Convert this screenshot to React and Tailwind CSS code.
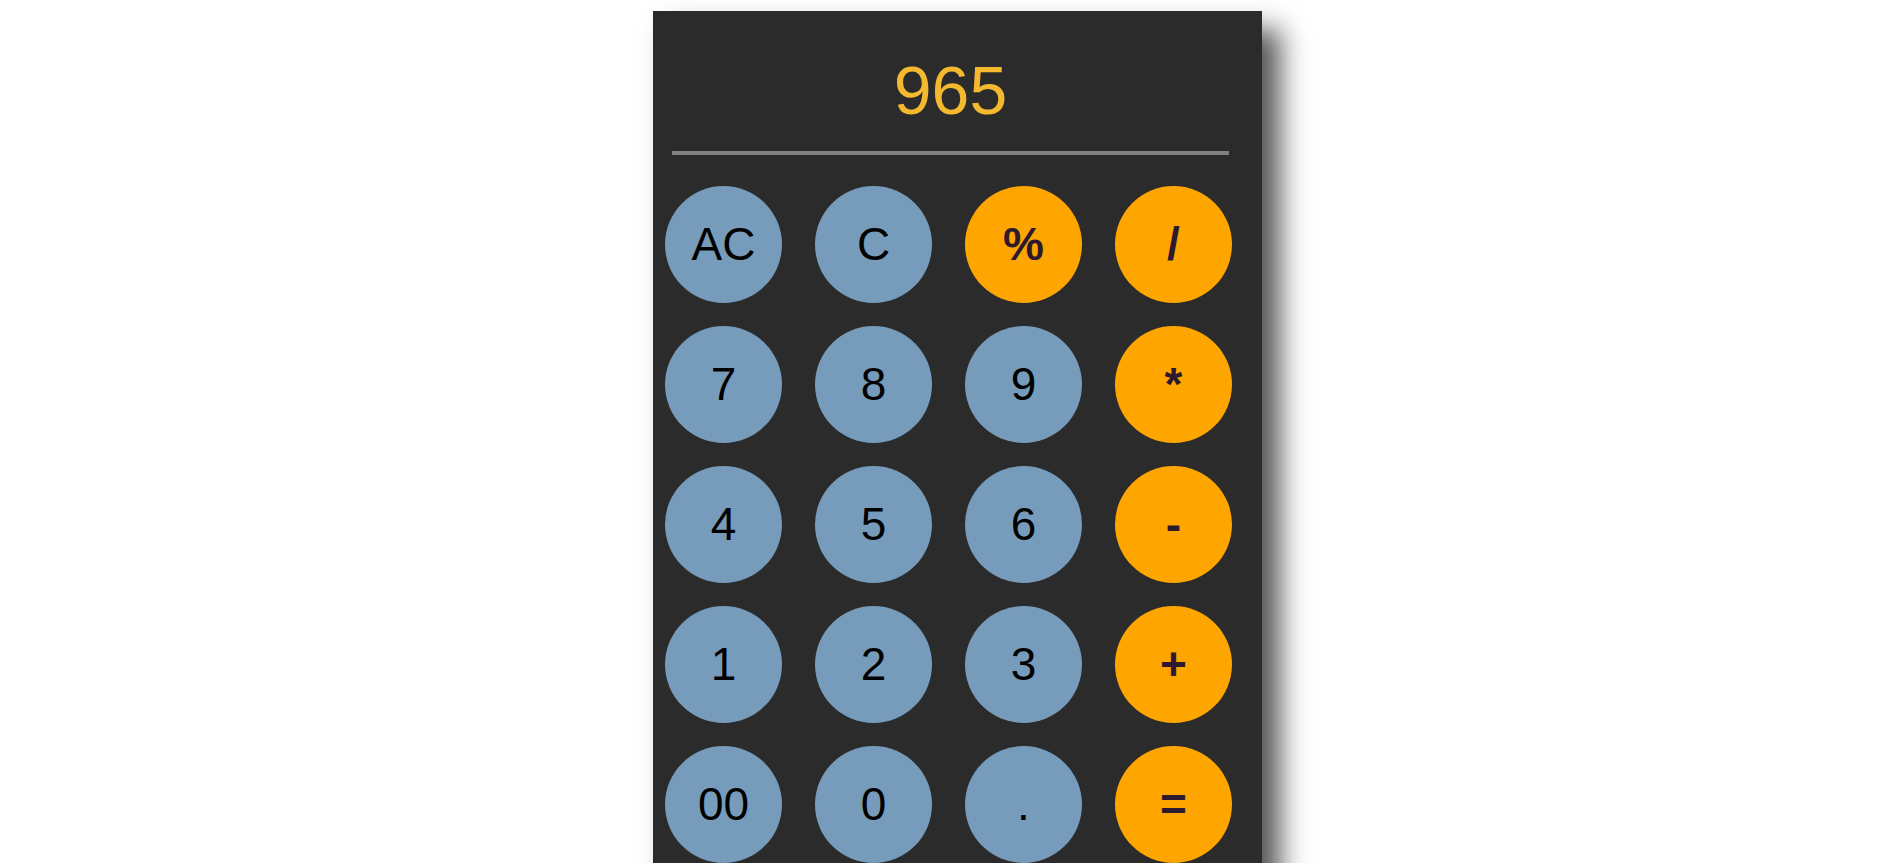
import React, { useState } from 'react';

const KEYS = [
  { k: 'AC', op: false }, { k: 'C', op: false }, { k: '%', op: true }, { k: '/', op: true },
  { k: '7', op: false }, { k: '8', op: false }, { k: '9', op: false }, { k: '*', op: true },
  { k: '4', op: false }, { k: '5', op: false }, { k: '6', op: false }, { k: '-', op: true },
  { k: '1', op: false }, { k: '2', op: false }, { k: '3', op: false }, { k: '+', op: true },
  { k: '00', op: false }, { k: '0', op: false }, { k: '.', op: false }, { k: '=', op: true },
];

export default function App() {
  const [display, setDisplay] = useState('965');

  const press = (k) => {
    if (k === 'AC') return setDisplay('');
    if (k === 'C') return setDisplay((d) => d.slice(0, -1));
    if (k === '=') {
      try {
        // eslint-disable-next-line no-new-func
        const v = Function(`return (${display})`)();
        setDisplay(String(v));
      } catch (e) { setDisplay('Error'); }
      return;
    }
    setDisplay((d) => d + k);
  };

  return (
    <div className="min-h-screen bg-white flex justify-center pl-[11px] pt-[11px] font-['Liberation_Sans',Arial,sans-serif]">
      <div className="w-[609px] bg-[#2b2b2b] pr-[14px] pb-[20px] shadow-[18px_18px_26px_#555555]">

        {/* Display */}
        <div className="pt-[45px] pb-[27px] h-[140px] text-center text-[68px] leading-none text-[#f4b92f]">
          {display}
        </div>
        <div className="mx-[19px] h-[4px] bg-[#808080]" />

        {/* Keys */}
        <div className="grid grid-cols-[repeat(4,117px)] gap-x-[33px] gap-y-[23px] pl-[12px] pt-[31px]">
          {KEYS.map(({ k, op }) => (
            <button
              key={k}
              onClick={() => press(k)}
              className={`w-[117px] h-[117px] rounded-full flex items-center justify-center text-[46px] ${op ? 'bg-[#ffa500] text-[#2d1a2e] font-bold' : 'bg-[#779cbb] text-black'}`}
            >
              {k}
            </button>
          ))}
        </div>
      </div>
    </div>
  );
}
